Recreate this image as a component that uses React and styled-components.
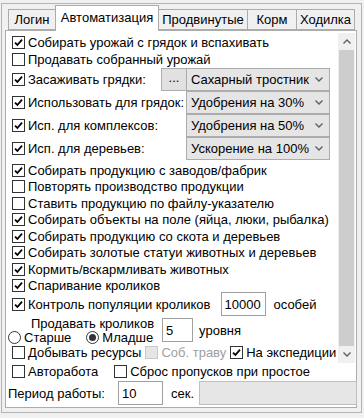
import React from "react";
import styled, { createGlobalStyle } from "styled-components";

const GlobalStyle = createGlobalStyle`
  html, body {
    margin: 0;
    padding: 0;
    background: #f0f0f0;
  }
  body {
    font-family: "Liberation Sans", Arial, sans-serif;
    font-size: 13px;
    color: #000;
  }
`;

const Screen = styled.div`
  width: 364px;
  height: 418px;
  padding: 3px 2px 0 1px;
  box-sizing: border-box;
`;

const Frame = styled.div`
  height: 410px;
  box-sizing: border-box;
  border: 1px solid #b4b4b4;
  padding: 0 4px 0 3px;
  display: flex;
  flex-direction: column;
`;

const TabStrip = styled.div`
  display: flex;
  align-items: flex-end;
  height: 26px;
  padding-left: 3px;
`;

const Tab = styled.div`
  width: ${(p) => p.$w}px;
  height: ${(p) => (p.$active ? 26 : 21)}px;
  box-sizing: border-box;
  border: 1px solid #acacac;
  border-bottom: ${(p) => (p.$active ? "none" : "1px solid #acacac")};
  margin-left: ${(p) => (p.$first ? 0 : -1)}px;
  margin-bottom: ${(p) => (p.$active ? -1 : 0)}px;
  background: ${(p) => (p.$active ? "#fff" : "#f0f0f0")};
  position: relative;
  z-index: ${(p) => (p.$active ? 2 : 1)};
  display: flex;
  align-items: center;
  justify-content: center;
  padding-bottom: ${(p) => (p.$active ? 3 : 0)}px;
  white-space: nowrap;
`;

const Panel = styled.div`
  height: 378px;
  box-sizing: border-box;
  border: 1px solid #acacac;
  background: #fff;
  display: flex;
  flex-direction: column;
  padding: 0 1px 1px 0;
`;

const ScrollArea = styled.div`
  display: flex;
  height: 330px;
  margin-top: 2px;
`;

const Content = styled.div`
  flex: 1;
  padding: 1px 8px 0 6px;
  display: flex;
  flex-direction: column;
  overflow: hidden;
`;

const Scrollbar = styled.div`
  width: 17px;
  background: #f0f0f0;
  display: flex;
  flex-direction: column;
  align-items: center;
`;

const ScrollArrow = styled.div`
  height: 17px;
  width: 17px;
  display: flex;
  align-items: center;
  justify-content: center;
`;

const Thumb = styled.div`
  flex: 1;
  width: 15px;
  background: #cdcdcd;
`;

const Bottom = styled.div`
  padding: 0 0 0 6px;
  display: flex;
  flex-direction: column;
`;

const Row = styled.div`
  display: flex;
  align-items: center;
  height: ${(p) => p.$h || 17}px;
  margin-top: ${(p) => p.$mt || 0}px;
  white-space: nowrap;
`;

const Box = styled.span`
  width: 13px;
  height: 13px;
  box-sizing: border-box;
  border: 1px solid ${(p) => (p.$disabled ? "#c8c8c8" : "#333")};
  background: ${(p) => (p.$disabled ? "#e6e6e6" : "#fff")};
  display: inline-flex;
  align-items: center;
  justify-content: center;
  flex: none;
  margin-right: 3px;
`;

const Text = styled.span`
  color: ${(p) => (p.$disabled ? "#a0a0a0" : "#000")};
  margin-left: ${(p) => p.$ml || 0}px;
`;

const CheckWrap = styled.label`
  display: inline-flex;
  align-items: center;
  margin-left: ${(p) => p.$ml || 0}px;
`;

const Tick = () => (
  <svg width="9" height="9" viewBox="0 0 9 9">
    <path d="M1 4.6 L3.4 7 L8 1.6" fill="none" stroke="#000" strokeWidth="1.8" />
  </svg>
);

const Check = ({ checked, disabled, children, ml }) => (
  <CheckWrap $ml={ml}>
    <Box $disabled={disabled}>{checked && <Tick />}</Box>
    <Text $disabled={disabled}>{children}</Text>
  </CheckWrap>
);

const RadioCircle = styled.span`
  width: 13px;
  height: 13px;
  box-sizing: border-box;
  border-radius: 50%;
  border: 1px solid #333;
  background: #fff;
  display: inline-flex;
  align-items: center;
  justify-content: center;
  margin-right: 3px;
  &::after {
    content: "";
    width: 7px;
    height: 7px;
    border-radius: 50%;
    background: ${(p) => (p.$checked ? "#333" : "transparent")};
  }
`;

const Radio = ({ checked, children, ml }) => (
  <CheckWrap $ml={ml}>
    <RadioCircle $checked={checked} />
    <Text>{children}</Text>
  </CheckWrap>
);

const RowLabel = styled.span`
  flex: 1;
`;

const Combo = styled.div`
  width: 144px;
  height: 23px;
  box-sizing: border-box;
  border: 1px solid #acacac;
  background: #e5e5e5;
  display: flex;
  align-items: center;
  padding: 0 6px 0 4px;
  justify-content: space-between;
`;

const DotsButton = styled.div`
  width: 25px;
  height: 23px;
  box-sizing: border-box;
  border: 1px solid #adadad;
  border-right: none;
  background: #e1e1e1;
  display: flex;
  align-items: center;
  justify-content: center;
  padding-bottom: 4px;
`;

const Chevron = ({ up }) => (
  <svg width="8" height="5" viewBox="0 0 8 5">
    <path
      d={up ? "M0.5 4.5 L4 1 L7.5 4.5" : "M0.5 0.5 L4 4 L7.5 0.5"}
      fill="none"
      stroke="#606060"
      strokeWidth="1.4"
    />
  </svg>
);

const Input = styled.div`
  width: ${(p) => p.$w}px;
  height: 24px;
  box-sizing: border-box;
  border: 1px solid ${(p) => (p.$disabled ? "#bfbfbf" : "#a0a0a0")};
  background: ${(p) => (p.$disabled ? "#e6e6e6" : "#fff")};
  display: flex;
  align-items: center;
  padding-left: 3px;
  margin-left: ${(p) => p.$ml || 0}px;
  flex: none;
`;

const RabbitGroup = styled.div`
  display: flex;
  align-items: center;
  height: 28px;
`;

const RabbitColumn = styled.div`
  display: flex;
  flex-direction: column;
  margin-left: -4px;
`;

const Line = styled.div`
  height: 14px;
  display: flex;
  align-items: center;
  padding-left: ${(p) => p.$pl || 0}px;
  white-space: nowrap;
`;

const combos = [
  ["Использовать для грядок:", "Удобрения на 30%"],
  ["Исп. для комплексов:", "Удобрения на 50%"],
  ["Исп. для деревьев:", "Ускорение на 100%"],
];

const simple = [
  [true, "Собирать продукцию с заводов/фабрик"],
  [false, "Повторять производство продукции"],
  [false, "Ставить продукцию по файлу-указателю"],
  [true, "Собирать объекты на поле (яйца, люки, рыбалка)"],
  [true, "Собирать продукцию со скота и деревьев"],
  [true, "Собирать золотые статуи животных и деревьев"],
  [true, "Кормить/вскармливать животных"],
  [true, "Спаривание кроликов"],
];

const tabs = [
  ["Логин", 48],
  ["Автоматизация", 104],
  ["Продвинутые", 90],
  ["Корм", 50],
  ["Ходилка", 59],
];

export default function App() {
  return (
    <>
      <GlobalStyle />
      <Screen>
        <Frame>
          <TabStrip>
            {tabs.map(([t, w], i) => (
              <Tab key={t} $w={w} $first={i === 0} $active={i === 1}>
                {t}
              </Tab>
            ))}
          </TabStrip>
          <Panel>
            <ScrollArea>
              <Content>
                <Row>
                  <Check checked>Собирать урожай с грядок и вспахивать</Check>
                </Row>
                <Row>
                  <Check>Продавать собранный урожай</Check>
                </Row>
                <Row $h={23}>
                  <RowLabel>
                    <Check checked>Засаживать грядки:</Check>
                  </RowLabel>
                  <DotsButton>...</DotsButton>
                  <Combo>
                    Сахарный тростник
                    <Chevron />
                  </Combo>
                </Row>
                {combos.map(([l, v]) => (
                  <Row $h={23} key={l}>
                    <RowLabel>
                      <Check checked>{l}</Check>
                    </RowLabel>
                    <Combo>
                      {v}
                      <Chevron />
                    </Combo>
                  </Row>
                ))}
                <Row $h={2} />
                {simple.map(([c, l]) => (
                  <Row $h={16.5} key={l}>
                    <Check checked={c}>{l}</Check>
                  </Row>
                ))}
                <Row $h={24} $mt={-2}>
                  <Check checked>Контроль популяции кроликов</Check>
                  <Input $w={45} $ml={10}>10000</Input>
                  <Text $ml={8}>особей</Text>
                </Row>
                <RabbitGroup>
                  <RabbitColumn>
                    <Line $pl={23}>Продавать кроликов</Line>
                    <Line>
                      <Radio>Старше</Radio>
                      <Radio checked ml={15}>Младше</Radio>
                    </Line>
                  </RabbitColumn>
                  <Input $w={31} $ml={8}>5</Input>
                  <Text $ml={6}>уровня</Text>
                </RabbitGroup>
                <Row>
                  <Check>Добывать ресурсы</Check>
                  <Check disabled ml={4}>Соб. траву</Check>
                  <Check checked ml={4}>На экспедиции</Check>
                </Row>
              </Content>
              <Scrollbar>
                <ScrollArrow>
                  <Chevron up />
                </ScrollArrow>
                <Thumb />
                <ScrollArrow>
                  <Chevron />
                </ScrollArrow>
              </Scrollbar>
            </ScrollArea>
            <Bottom>
              <Row>
                <Check>Авторабота</Check>
                <Check ml={16}>Сброс пропусков при простое</Check>
              </Row>
              <Row $h={26}>
                <Text $ml={-4}>Период работы:</Text>
                <Input $w={45} $ml={13}>10</Input>
                <Text $ml={8}>сек.</Text>
                <Input $w={158} $ml={5} $disabled />
              </Row>
            </Bottom>
          </Panel>
        </Frame>
      </Screen>
    </>
  );
}
